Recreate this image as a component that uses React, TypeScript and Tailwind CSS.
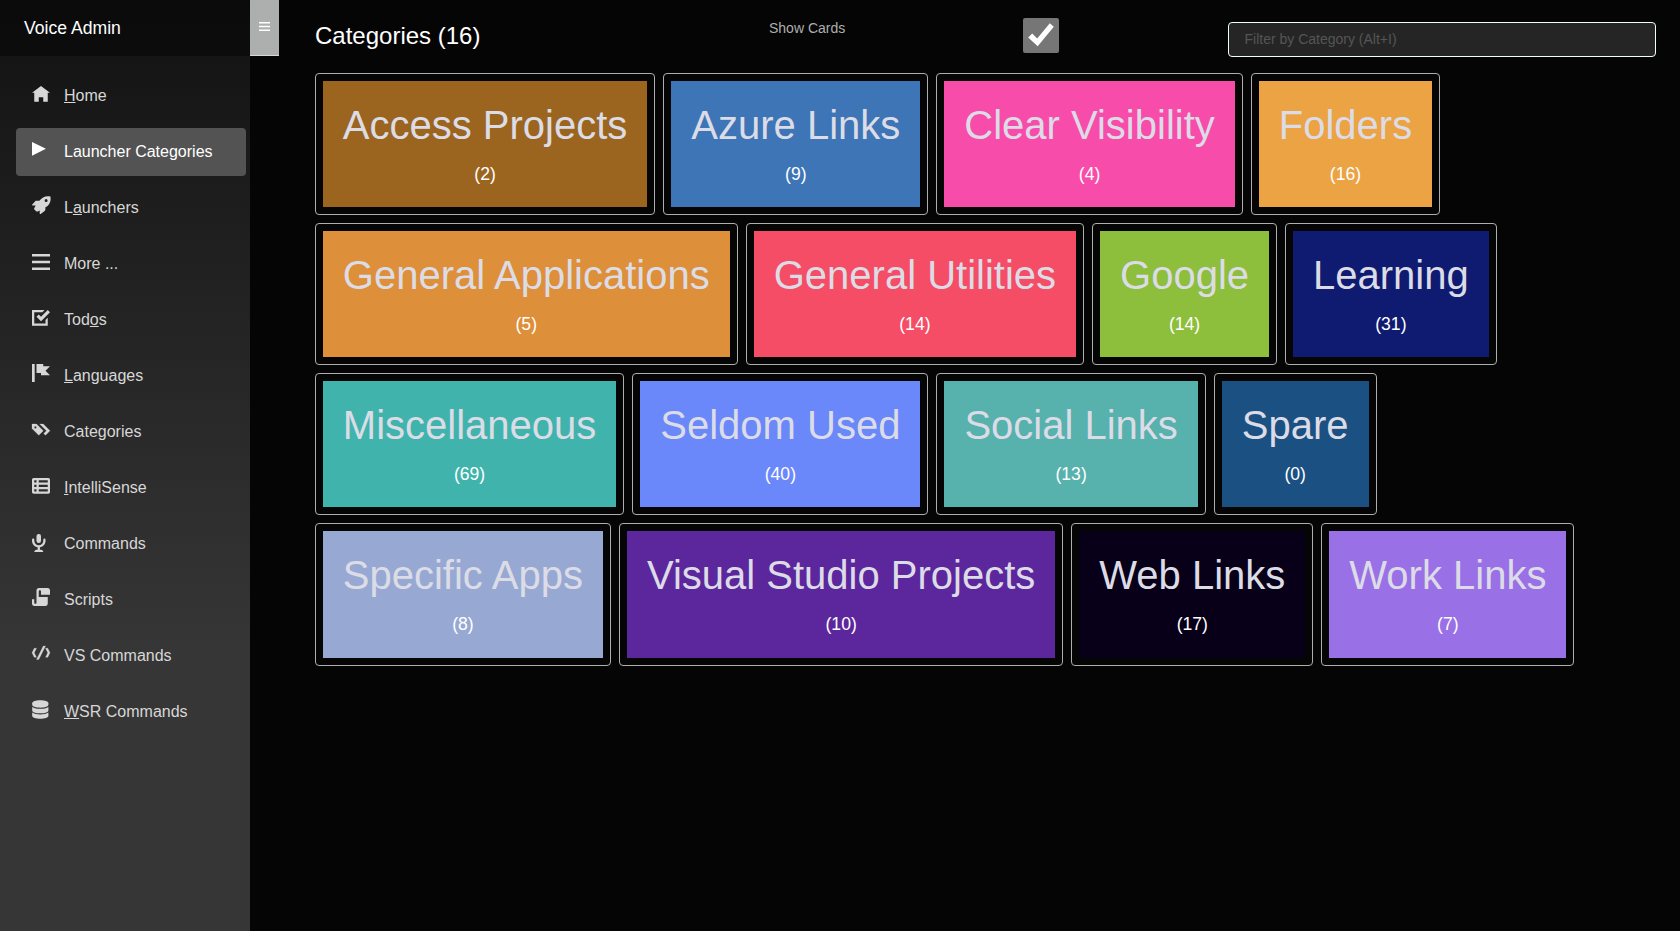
import React from "react";

type GlyphProps = { d: string; dy?: number; className?: string };

function Glyph({ d, dy = 0.89, className = "" }: GlyphProps) {
  return (
    <svg viewBox="0 0 8 8" className={`h-[18px] w-[18px] overflow-visible fill-current ${className}`}>
      <path d={d} transform={`translate(0 ${dy})`} />
    </svg>
  );
}

function RocketIcon() {
  return (
    <svg viewBox="0 0 19 19" className="h-[19px] w-[19px] fill-current">
      <path
        fillRule="evenodd"
        d="M18.4.4C13.6-.5 10 1.2 7.4 4.8H4.6C3.6 4.8 3 5.3 2.6 6L.2 8.6c-.2.6.1.9.6.9h2.9L2.2 12.2c-.2.5-.1 1 .2 1.4l1.8 1.7c.5.4 1 .4 1.6.1l1.9-1v3c0 .6.5.9 1 .6l3.600-2.700c.7-.5 1.100-1.100 1.100-2v-2.100C17.200 9.700 19.300 5.300 18.400.4ZM14.100 6.100a1.500 1.500 0 1 1 0-3 1.500 1.500 0 0 1 0 3Z"
      />
    </svg>
  );
}

function DatabaseIcon() {
  return (
    <svg viewBox="0 0 17 19" className="h-[19px] w-[17px] fill-current">
      <path d="M.2 3.200C.2 1.400 3.700.2 8.300.2s8.100 1.200 8.100 3v1.600c0 1.700-3.500 2.900-8.100 2.900S.2 6.500.2 4.800Z" />
      <path d="M.2 6.900c1.700 1.300 4.700 1.900 8.100 1.900s6.400-.6 8.100-1.900v3.500c0 1.700-3.500 2.900-8.100 2.900S.2 12.100.2 10.400Z" />
      <path d="M.2 12.500c1.700 1.300 4.700 1.900 8.100 1.900s6.400-.6 8.100-1.900v3.200c0 1.800-3.500 3-8.100 3s-8.100-1.200-8.100-3Z" />
    </svg>
  );
}

type NavEntry = {
  before?: string;
  key?: string;
  after: string;
  active?: boolean;
  icon: React.ReactNode;
};

const navEntries: NavEntry[] = [
  { key: "H", after: "ome", icon: <Glyph d="M4 0l-4 3h1v4h2v-2h2v2h2v-4.03l1 .03-4-3z" /> },
  { after: "Launcher Categories", active: true, icon: <Glyph d="M0 0v6.1l6.2-3.05-6.2-3.05z" /> },
  { before: "L", key: "a", after: "unchers", icon: <RocketIcon /> },
  { after: "More ...", icon: <Glyph d="M0 0v1.1h8v-1.1h-8zm0 2.97v1.1h8v-1.1h-8zm0 3v1.1h8v-1.1h-8z" /> },
  {
    before: "Tod",
    key: "o",
    after: "s",
    icon: <Glyph d="M0 0v7h7v-3.59l-1 1v1.59h-5v-5h3.59l1-1h-5.59zm7 0l-3 3-1-1-1 1 2 2 4-4-1-1z" />,
  },
  { key: "L", after: "anguages", icon: <Glyph dy={0} d="M0 0v8h1.2v-8h-1.2zm2 0v4h2v1h4l-2-1.97 2-2.03h-3v-1h-3z" /> },
  {
    after: "Categories",
    icon: (
      <Glyph
        dy={1.78}
        d="M0 0v2l3 3 1.5-1.5.5-.5-2-2-1-1h-2zm3.41 0l3 3-1.19 1.22.78.78 2-2-3-3h-1.59zm-1.91 1c.28 0 .5.22.5.5s-.22.5-.5.5-.5-.22-.5-.5.22-.5.5-.5z"
        className="stroke-current stroke-[0.12]"
      />
    ),
  },
  {
    key: "I",
    after: "ntelliSense",
    icon: (
      <Glyph d="M.75 0c-.4 0-.75.35-.75.75v5.5c0 .4.35.75.75.75h6.5c.4 0 .75-.35.75-.75v-5.5c0-.4-.35-.75-.75-.75h-6.5zm.25 1h1v1h-1v-1zm2 0h4v1h-4v-1zm-2 2h1v1h-1v-1zm2 0h4v1h-4v-1zm-2 2h1v1h-1v-1zm2 0h4v1h-4v-1z" />
    ),
  },
  {
    after: "Commands",
    icon: (
      <Glyph d="M2.91-.03a1 1 0 0 0-.13.03 1 1 0 0 0-.78 1v2a1 1 0 1 0 2 0v-2a1 1 0 0 0-1.09-1.03zm-2.56 2.03a.5.5 0 0 0-.34.5v.5c0 1.48 1.09 2.69 2.5 2.94v1.06h-.5c-.55 0-1 .45-1 1h4.01c0-.55-.45-1-1-1h-.5v-1.06c1.41-.24 2.5-1.46 2.5-2.94v-.5a.5.5 0 1 0-1 0v.5c0 1.11-.89 2-2 2-1.11 0-2-.89-2-2v-.5a.5.5 0 0 0-.59-.5.5.5 0 0 0-.06 0z" />
    ),
  },
  {
    after: "Scripts",
    icon: (
      <Glyph
        dy={0}
        d="M3 0c-.55 0-1 .45-1 1v5.5c0 .28-.22.5-.5.5s-.5-.22-.5-.5v-1.5h-1v2c0 .55.45 1 1 1h5c.55 0 1-.45 1-1v-3h-4v-2.5c0-.28.22-.5.5-.5s.5.22.5.5v1.5h4v-2c0-.55-.45-1-1-1h-4z"
      />
    ),
  },
  {
    after: "VS Commands",
    icon: (
      <Glyph
        d="M5 0l-3 6h1l3-6h-1zm-4 1l-1 2 1 2h1l-1-2 1-2h-1zm5 0l1 2-1 2h1l1-2-1-2h-1z"
        className="stroke-current stroke-[0.12]"
      />
    ),
  },
  { key: "W", after: "SR Commands", icon: <DatabaseIcon /> },
];

const categories = [
  { name: "Access Projects", count: 2, color: "bg-[#9b651f]" },
  { name: "Azure Links", count: 9, color: "bg-[#3e75b6]" },
  { name: "Clear Visibility", count: 4, color: "bg-[#f84cab]" },
  { name: "Folders", count: 16, color: "bg-[#eba344]" },
  { name: "General Applications", count: 5, color: "bg-[#dd8f39]" },
  { name: "General Utilities", count: 14, color: "bg-[#f54d65]" },
  { name: "Google", count: 14, color: "bg-[#8dbe3c]" },
  { name: "Learning", count: 31, color: "bg-[#0f1b71]" },
  { name: "Miscellaneous", count: 69, color: "bg-[#40b4ac]" },
  { name: "Seldom Used", count: 40, color: "bg-[#6a88fa]" },
  { name: "Social Links", count: 13, color: "bg-[#57b1ad]" },
  { name: "Spare", count: 0, color: "bg-[#1b5083]" },
  { name: "Specific Apps", count: 8, color: "bg-[#97a9d3]" },
  { name: "Visual Studio Projects", count: 10, color: "bg-[#5c279d]" },
  { name: "Web Links", count: 17, color: "bg-[#080018]" },
  { name: "Work Links", count: 7, color: "bg-[#9a70e6]" },
];

function Sidebar() {
  return (
    <aside className="w-[250px] shrink-0 bg-[linear-gradient(180deg,#121212_0%,#363636_70%)]">
      <div className="flex h-14 items-center bg-black/40 pl-6 text-[17.6px] text-white">Voice Admin</div>
      <nav className="flex flex-col gap-2 pt-4 pr-1 pl-4">
        {navEntries.map((e) => (
          <a
            key={e.after}
            className={
              e.active
                ? "flex h-12 rounded bg-[#535353] pl-4 text-white"
                : "flex h-12 rounded pl-4 text-[#d7d7d7]"
            }
          >
            <span className="w-8 shrink-0 pt-3">{e.icon}</span>
            <span className="text-base leading-[47px]">
              {e.before}
              {e.key && <u>{e.key}</u>}
              {e.after}
            </span>
          </a>
        ))}
      </nav>
    </aside>
  );
}

export default function App() {
  return (
    <div className="flex h-[931px] w-[1680px] overflow-hidden bg-[#050505] font-['Liberation_Sans',Arial,sans-serif]">
      <Sidebar />
      <button className="flex h-14 w-[29px] shrink-0 justify-center border-b border-[#d8d8d8] bg-[#adafae] pt-[22px]">
        <svg viewBox="0 0 11 9" className="h-[9px] w-[11px] fill-white">
          <path d="M0 0h11v1.6H0zM0 3.7h11v1.6H0zM0 7.4h11V9H0z" />
        </svg>
      </button>
      <main className="min-w-0 flex-1 pl-9">
        <header className="flex h-[73px] items-start">
          <h1 className="w-[454px] pt-[18px] text-2xl leading-9 text-white">Categories (16)</h1>
          <span className="w-[254px] pt-[18px] text-sm text-[#adafae]">Show Cards</span>
          <span className="mt-[18px] flex h-[35px] w-9 items-center justify-center rounded-[2px] bg-[#767676]">
            <svg viewBox="0 0 36 35" className="h-[35px] w-9">
              <path d="M5.2 19.6 9.2 15.4 14.2 20.4 26.8 5.3 30.8 8.8 14.7 28.3Z" fill="#fff" />
            </svg>
          </span>
          <input
            placeholder="Filter by Category (Alt+I)"
            className="mt-[22px] ml-[169px] h-[35px] w-[428px] rounded border border-[#f0fffa] bg-[#252525] px-[15.5px] pb-[2px] text-sm text-white placeholder:text-[#555555]"
          />
        </header>
        <section className="-ml-[0.2px] flex w-[1345px] flex-wrap gap-2">
          {categories.map((c) => (
            <article key={c.name} className="h-[142.17px] rounded border border-[#adafae] p-[7px]">
              <div className={`flex h-full flex-col items-center px-5 pt-5 ${c.color}`}>
                <h2 className="text-[40px] leading-12 whitespace-nowrap text-[#dcdce6]">{c.name}</h2>
                <p className="pt-3 text-[17.6px] leading-[27px] text-white">({c.count})</p>
              </div>
            </article>
          ))}
        </section>
      </main>
    </div>
  );
}
